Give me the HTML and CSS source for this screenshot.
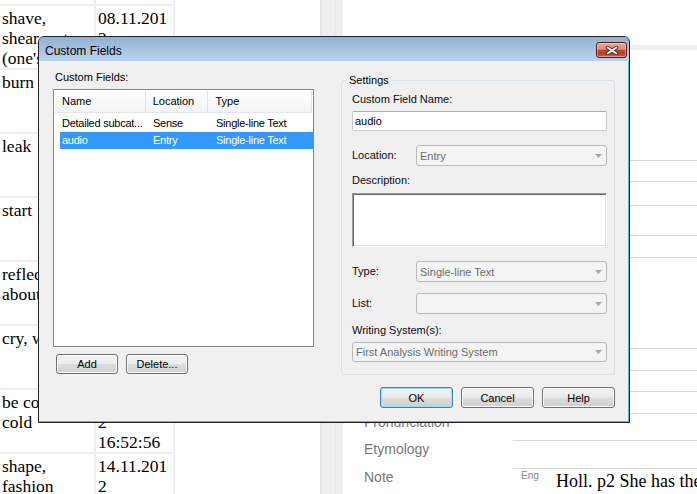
FILE: index.html
```html
<!DOCTYPE html>
<html>
<head>
<meta charset="utf-8">
<link rel="stylesheet" href="styles.css">
</head>
<body>
<div class="desk">
  <div class="sheet">
    <div class="trow top"><div class="c1"></div><div class="c2"></div></div>
    <div class="trow"><div class="c1">shave,<br>shear, cut<br>(one's hair)</div><div class="c2">08.11.201<br>2<br>16:52:56</div></div>
    <div class="trow"><div class="c1">burn</div><div class="c2">08.11.201<br>2<br>16:52:56</div></div>
    <div class="trow"><div class="c1">leak</div><div class="c2">08.11.201<br>2<br>16:52:56</div></div>
    <div class="trow"><div class="c1">start</div><div class="c2">08.11.201<br>2<br>16:52:56</div></div>
    <div class="trow"><div class="c1">reflect, think<br>about</div><div class="c2">08.11.201<br>2<br>16:52:56</div></div>
    <div class="trow"><div class="c1">cry, weep</div><div class="c2">08.11.201<br>2<br>16:52:56</div></div>
    <div class="trow"><div class="c1">be cool,<br>cold</div><div class="c2">14.11.201<br>2<br>16:52:56</div></div>
    <div class="trow"><div class="c1">shape,<br>fashion</div><div class="c2">14.11.201<br>2<br>16:52:56</div></div>
  </div>
  <div class="scroll"><div class="s1"></div><div class="s2"></div><div class="s3"></div><div class="s4"></div></div>
  <div class="panel">
    <div class="band"></div>
    <div class="prow r21"><div class="plabel"></div><div class="pval"></div></div>
    <div class="prow r24"><div class="plabel"></div><div class="pval"></div></div>
    <div class="prow r30"><div class="plabel"></div><div class="pval"></div></div>
    <div class="prow r22"><div class="plabel"></div><div class="pval"></div></div>
    <div class="prow r91"><div class="plabel"></div><div class="pval"></div></div>
    <div class="prow r22"><div class="plabel"></div><div class="pval"></div></div>
    <div class="prow r21"><div class="plabel"></div><div class="pval"></div></div>
    <div class="prow r22"><div class="plabel"></div><div class="pval"></div></div>
    <div class="prow r27"><div class="plabel">Pronunciation</div><div class="pval"></div></div>
    <div class="prow r28"><div class="plabel">Etymology</div><div class="pval"></div></div>
    <div class="prow r28"><div class="plabel">Note</div><div class="pval"><span class="eng">Eng</span><span class="notetext">Holl. p2 She has the</span></div></div>
  </div>

  <div class="dialog">
    <div class="titlebar">
      <span class="title">Custom Fields</span>
      <div class="close">
        <svg width="14" height="9" viewBox="0 0 14 9"><path d="M2.5 1.5 L11.5 7.5 M11.5 1.5 L2.5 7.5" stroke="#3b2420" stroke-width="3.6" stroke-linecap="round"/><path d="M2.5 1.5 L11.5 7.5 M11.5 1.5 L2.5 7.5" stroke="#ffffff" stroke-width="2" stroke-linecap="round"/></svg>
      </div>
    </div>
    <div class="dbody">
      <div class="leftcol">
        <div class="toplabel">Custom Fields:</div>
        <div class="list">
          <div class="lhead">
            <div class="hc hn">Name</div>
            <div class="hc hl">Location</div>
            <div class="hc ht">Type</div>
          </div>
          <div class="lrow first">
            <div class="cn">Detailed subcat...</div>
            <div class="cl">Sense</div>
            <div class="ct">Single-line Text</div>
          </div>
          <div class="lrow sel">
            <div class="cn">audio</div>
            <div class="cl">Entry</div>
            <div class="ct">Single-line Text</div>
          </div>
        </div>
        <div class="lbtns">
          <div class="btn small">Add</div>
          <div class="btn small">Delete...</div>
        </div>
      </div>
      <fieldset class="group">
        <legend>Settings</legend>
        <div class="flabel">Custom Field Name:</div>
        <div class="tb">audio</div>
        <div class="frow m14">
          <div class="flabel">Location:</div>
          <div class="combo"><span>Entry</span><svg class="arrow" width="7" height="4" viewBox="0 0 7 4"><path d="M0 0 H7 L3.5 4 Z" fill="#a7a7a7"/></svg></div>
        </div>
        <div class="flabel m8">Description:</div>
        <div class="ta"></div>
        <div class="frow m14">
          <div class="flabel">Type:</div>
          <div class="combo"><span>Single-line Text</span><svg class="arrow" width="7" height="4" viewBox="0 0 7 4"><path d="M0 0 H7 L3.5 4 Z" fill="#a7a7a7"/></svg></div>
        </div>
        <div class="frow m11">
          <div class="flabel">List:</div>
          <div class="combo"><span></span><svg class="arrow" width="7" height="4" viewBox="0 0 7 4"><path d="M0 0 H7 L3.5 4 Z" fill="#a7a7a7"/></svg></div>
        </div>
        <div class="flabel m10">Writing System(s):</div>
        <div class="combo wide"><span>First Analysis Writing System</span><svg class="arrow" width="7" height="4" viewBox="0 0 7 4"><path d="M0 0 H7 L3.5 4 Z" fill="#a7a7a7"/></svg></div>
      </fieldset>
    </div>
    <div class="dfoot">
      <div class="btn big default">OK</div>
      <div class="btn big">Cancel</div>
      <div class="btn big">Help</div>
    </div>
  </div>
</div>
</body>
</html>
```

FILE: styles.css
```css
html, body {
  margin: 0;
  padding: 0;
  background: #ffffff;
}
.desk {
  position: relative;
  width: 697px;
  height: 494px;
  overflow: hidden;
  display: flex;
}

/* left table */
.sheet {
  width: 320px;
  flex: none;
  font-family: "Liberation Serif", "Times New Roman", serif;
  font-size: 17.5px;
  line-height: 20px;
  color: #000;
}
.trow {
  display: flex;
  width: 175px;
  height: 64px;
  box-sizing: border-box;
  border-top: 2px solid #efefef;
  overflow: hidden;
}
.trow.top {
  height: 4px;
  border-top: none;
}
.c1, .c2 {
  box-sizing: border-box;
  padding: 2px 0 0 2px;
  border-right: 2px solid #efefef;
  white-space: nowrap;
  overflow: hidden;
}
.c1 { width: 96px; }
.c2 { width: 79px; }

/* scroll strip */
.scroll {
  width: 23px;
  flex: none;
  display: flex;
}
.s1 { width: 2px; background: #e4e4e4; }
.s2 { width: 13px; background: #eeeeee; }
.s3 { width: 1px; background: #e6e6e6; }
.s4 { flex: 1; background: #efefef; }

/* right panel */
.panel {
  flex: 1;
  min-width: 0;
  font-family: "Liberation Sans", Arial, sans-serif;
}
.band {
  margin-top: 45px;
  height: 5px;
  background: #efefef;
  margin-bottom: 110px;
}
.prow { display: flex; }
.r21 { height: 21px; }
.r22 { height: 22px; }
.r24 { height: 24px; }
.r27 { height: 27px; }
.r28 { height: 28px; }
.r30 { height: 30px; }
.r91 { height: 91px; }
.plabel {
  width: 170px;
  flex: none;
  box-sizing: border-box;
  padding: 1px 0 0 21px;
  font-size: 14px;
  line-height: 16px;
  color: #777777;
}
.pval {
  flex: 1;
  min-width: 0;
  border-top: 1px solid #d8d8d8;
  display: flex;
  align-items: flex-start;
  padding-left: 8px;
  white-space: nowrap;
  overflow: hidden;
}
.eng {
  width: 35px;
  flex: none;
  margin-top: 1px;
  font-size: 10px;
  line-height: 12px;
  color: #8a8a8a;
}
.notetext {
  margin-top: 2px;
  font-family: "Liberation Serif", "Times New Roman", serif;
  font-size: 18px;
  line-height: 20px;
  color: #000;
}

/* dialog window */
.dialog {
  position: absolute;
  left: 38px;
  top: 36px;
  width: 592px;
  height: 387px;
  box-sizing: border-box;
  border: 1px solid #222222;
  border-radius: 6px 6px 0 0;
  background: #f0f0f0;
  box-shadow: inset -1px -1px 0 #5ab7e3;
  font-family: "Liberation Sans", Arial, sans-serif;
  font-size: 11px;
  color: #000;
  overflow: hidden;
}
.titlebar {
  height: 24px;
  display: flex;
  align-items: center;
  padding-left: 6px;
  background: linear-gradient(#92afd2, #bcd3ec);
  border-radius: 5px 5px 0 0;
}
.title {
  font-size: 12px;
  color: #000;
  margin-top: 3px;
}
.close {
  margin-left: auto;
  margin-right: 2px;
  align-self: flex-start;
  margin-top: 5px;
  width: 31px;
  height: 16px;
  box-sizing: border-box;
  border: 1px solid #4d231c;
  border-radius: 3px;
  background: linear-gradient(#e9ab9b 0%, #d98a78 45%, #c2432f 52%, #b93d2b 78%, #d46b52 100%);
  box-shadow: inset 0 0 0 1px rgba(255, 220, 210, 0.45);
  display: flex;
  align-items: center;
  justify-content: center;
}
.close svg { display: block; }

.dbody {
  display: grid;
  grid-template-columns: 261px 274px;
  column-gap: 27px;
  align-items: start;
  padding: 10px 14px 0 14px;
}
.toplabel {
  padding-left: 2px;
  line-height: 13px;
}
.list {
  margin-top: 5px;
  height: 258px;
  box-sizing: border-box;
  border: 1px solid #828790;
  background: #ffffff;
  padding: 1px;
}
.lhead {
  display: flex;
  height: 22px;
  box-sizing: border-box;
  background: linear-gradient(#ffffff, #f3f4f6);
  border-bottom: 1px solid #e3e5e8;
}
.hc {
  box-sizing: border-box;
  padding-left: 7px;
  line-height: 21px;
  border-right: 1px solid #e1e3e6;
}
.hn { width: 91px; }
.hl { width: 63px; }
.ht { width: 104px; }
.lrow {
  display: flex;
  height: 17px;
  line-height: 17px;
  margin-left: 5px;
  width: 253px;
  white-space: nowrap;
  letter-spacing: -0.25px;
}
.lrow.first { margin-top: 2px; }
.lrow.sel {
  background: #3399ff;
  color: #ffffff;
}
.cn { width: 86px; padding-left: 2px; box-sizing: border-box; overflow: hidden; }
.cl { width: 63px; padding-left: 7px; box-sizing: border-box; overflow: hidden; }
.ct { flex: 1; padding-left: 7px; overflow: hidden; }

.lbtns {
  display: flex;
  gap: 8px;
  margin-top: 7px;
  padding-left: 3px;
}
.btn {
  box-sizing: border-box;
  border: 1px solid #707070;
  border-radius: 3px;
  background: linear-gradient(#f3f3f3 0%, #ebebeb 48%, #dddddd 52%, #cfcfcf 100%);
  box-shadow: inset 0 0 0 1px #fbfbfb;
  display: flex;
  align-items: center;
  justify-content: center;
  color: #000;
}
.btn.small { width: 62px; height: 20px; }
.btn.big { width: 73px; height: 21px; }
.btn.default {
  border-color: #3c7fb1;
  box-shadow: inset 0 0 0 1px #9edcf6;
}

.group {
  margin: 3px 0 0 0;
  width: 274px;
  min-width: 0;
  box-sizing: border-box;
  border: 1px solid #d5dfe5;
  border-radius: 3px;
  padding: 6px 7px 12px 10px;
}
.group legend {
  padding: 0 2px;
  margin-left: -5px;
  line-height: 13px;
}
.flabel {
  line-height: 13px;
  color: #0a0a14;
}
.m8 { margin-top: 8px; }
.m10 { margin-top: 10px; }
.m11 { margin-top: 11px; }
.m14 { margin-top: 14px; }
.tb {
  margin-top: 5px;
  height: 20px;
  box-sizing: border-box;
  border: 1px solid #c9cdd2;
  border-top-color: #abadb3;
  border-radius: 2px;
  background: #ffffff;
  padding-left: 2px;
  line-height: 18px;
}
.frow {
  display: grid;
  grid-template-columns: 64px 1fr;
  align-items: center;
  height: 21px;
}
.combo {
  height: 21px;
  box-sizing: border-box;
  border: 1px solid #b6babe;
  border-radius: 3px;
  background: #f4f4f4;
  color: #6d6d6d;
  display: flex;
  align-items: center;
  padding-left: 3px;
}
.combo.wide {
  margin-top: 5px;
  height: 20px;
}
.arrow {
  margin-left: auto;
  margin-right: 4px;
  display: block;
}
.ta {
  margin-top: 6px;
  height: 54px;
  box-sizing: border-box;
  border: 1px solid;
  border-color: #9a9a9a #ffffff #ffffff #9a9a9a;
  box-shadow: inset 1px 1px 0 #6a6a6a, inset -1px -1px 0 #e3e3e3;
  background: #ffffff;
}
.dfoot {
  display: flex;
  justify-content: flex-end;
  gap: 8px;
  padding: 0 14px;
  margin-top: 12px;
}
```
